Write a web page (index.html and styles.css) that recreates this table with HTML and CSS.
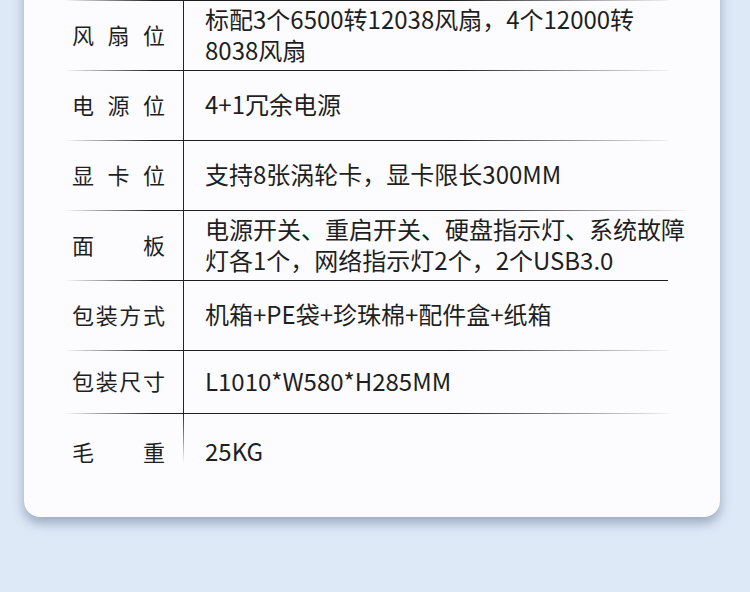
FILE: index.html
```html
<!DOCTYPE html>
<html>
<head>
<meta charset="utf-8">
<meta name="viewport" content="width=device-width, initial-scale=1">
<link rel="stylesheet" href="styles.css">
</head>
<body>
<div class="card">
  <div class="spec">
    <div class="row">
      <div class="label">风扇位</div>
      <div class="value">标配3个6500转12038风扇，4个12000转<br>8038风扇</div>
    </div>
    <div class="row">
      <div class="label">电源位</div>
      <div class="value">4+1冗余电源</div>
    </div>
    <div class="row">
      <div class="label">显卡位</div>
      <div class="value">支持8张涡轮卡，显卡限长300MM</div>
    </div>
    <div class="row">
      <div class="label">面板</div>
      <div class="value">电源开关、重启开关、硬盘指示灯、系统故障<br>灯各1个，网络指示灯2个，2个USB3.0</div>
    </div>
    <div class="row row-solid">
      <div class="label">包装方式</div>
      <div class="value">机箱+PE袋+珍珠棉+配件盒+纸箱</div>
    </div>
    <div class="row row-short">
      <div class="label">包装尺寸</div>
      <div class="value">L1010*W580*H285MM</div>
    </div>
    <div class="row row-last">
      <div class="label">毛重</div>
      <div class="value">25KG</div>
    </div>
  </div>
</div>
</body>
</html>
```

FILE: styles.css
```css
body {
  margin: 0;
  height: 592px;
  overflow: hidden;
  background: #dee9f8;
  font-family: "Noto Sans CJK SC", "Noto Sans", sans-serif;
  color: #1f1f1f;
}
.card {
  margin: -40px 30px 0 24px;
  padding: 40px 52px 26px 40px;
  background: #fcfcfe;
  border-radius: 0 0 16px 16px;
  box-shadow: 0 6px 12px rgba(60, 78, 110, 0.42);
}
.row {
  display: grid;
  grid-template-columns: 119px 1fr;
  height: 70px;
}
.label {
  box-sizing: border-box;
  padding: 0 18px 0 8px;
  font-size: 22px;
  line-height: 68px;
  text-align: justify;
  text-align-last: justify;
  background: linear-gradient(to right, rgba(30, 30, 30, 0), #1e1e1e 75%) top / 100% 1px no-repeat;
}
.value {
  display: flex;
  align-items: center;
  padding: 0 0 3px 21px;
  border-left: 1px solid #222;
  font-size: 24px;
  line-height: 31px;
  white-space: nowrap;
  background: linear-gradient(to right, #1e1e1e 55%, rgba(30, 30, 30, 0.06)) top / 100% 1px no-repeat;
}
.row-short {
  height: 63px;
}
.row-short .label {
  line-height: 61px;
}
.row-solid .value {
  background: linear-gradient(#1e1e1e, #1e1e1e) top / 100% 1px no-repeat;
}
.row-last {
  height: 78px;
}
.row-last .label {
  line-height: 76px;
}
.row-last .value {
  border-left: none;
  padding-left: 22px;
  background:
    linear-gradient(to right, #1e1e1e 55%, rgba(30, 30, 30, 0.06)) top / 100% 1px no-repeat,
    linear-gradient(to bottom, #222, rgba(34, 34, 34, 0)) left top / 1px 50px no-repeat;
}
```
